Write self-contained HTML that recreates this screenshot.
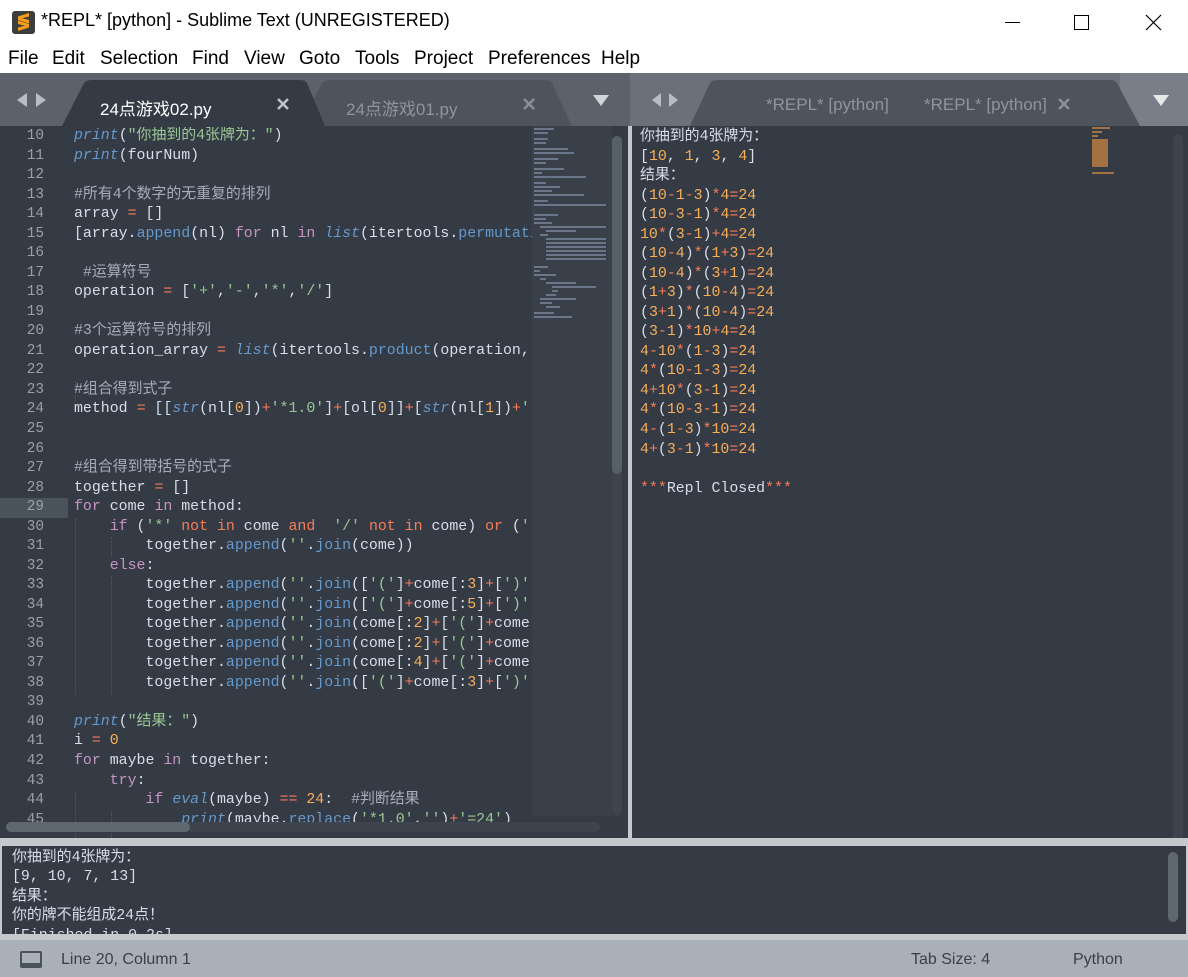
<!DOCTYPE html>
<html><head><meta charset="utf-8">
<style>
*{margin:0;padding:0;box-sizing:border-box}
body{width:1188px;height:977px;overflow:hidden;background:#343b45;font-family:"Liberation Sans","Noto Sans CJK SC",sans-serif;position:relative}
.abs{position:absolute}
#title{left:0;top:0;width:1188px;height:40px;background:#fff}
#title .t{left:41px;top:10px;font-size:18px;color:#000;white-space:nowrap}
#menu{left:0;top:40px;width:1188px;height:35px;background:#fff}
#menu span{position:absolute;top:8px;font-size:19px;color:#000}
#tabbar{left:0;top:73px;width:1188px;height:53px;background:#5b626c}
.mono{font-family:"Liberation Mono","Noto Sans CJK SC",monospace}
.code{font-size:14.9px;line-height:19.53px;white-space:pre;color:#d8dee9}
.ln{color:#9aa0a8;text-align:right;width:44px;font-size:14.4px}
.f{color:#6699cc;font-style:italic}
.m{color:#6699cc}
.s{color:#99c794}
.k{color:#c594c5}
.r{color:#f97b58}
.n{color:#f9ae58}
.c{color:#a6acb9}
</style></head><body>
<div id="title" class="abs">
  <div class="abs" style="left:12px;top:11px;width:23px;height:23px;background:#3d3d3d;border-radius:3px">
    <svg width="23" height="23" viewBox="0 0 23 23"><path d="M17 4 L6 7.5 L6 11 L17 14.5 L17 11 L10 9.3 L17 7.5Z M6 11.5 L17 15 L17 18.5 L6 22 L6 18.5 L13 16.7 L6 15Z" fill="#f89c1c" transform="translate(0,-2)"/></svg>
  </div>
  <div class="abs t">*REPL* [python] - Sublime Text (UNREGISTERED)</div>
  <div class="abs" style="left:1005px;top:22px;width:15px;height:1px;background:#000"></div>
  <div class="abs" style="left:1074px;top:15px;width:15px;height:15px;border:1px solid #000"></div>
  <svg class="abs" style="left:1145px;top:14px" width="17" height="17"><path d="M1 1L16 16M16 1L1 16" stroke="#000" stroke-width="1.2"/></svg>
</div>
<div id="menu" class="abs"><span style="left:8px">File</span><span style="left:52px">Edit</span><span style="left:100px">Selection</span><span style="left:192px">Find</span><span style="left:244px">View</span><span style="left:299px">Goto</span><span style="left:355px">Tools</span><span style="left:414px">Project</span><span style="left:488px">Preferences</span><span style="left:601px">Help</span></div>
<div id="tabbar" class="abs">
  <svg class="abs" style="left:0;top:0" width="1188" height="53">
    <rect x="630" y="0" width="558" height="53" fill="#6a717a"/>
    <rect x="1120" y="0" width="68" height="53" fill="#787f88"/>
    <path d="M17 27 L27 20 L27 34Z M36 20 L46 27 L36 34Z" fill="#b8bdc3"/>
    <path d="M652 27 L661 20 L661 34Z M669 20 L678 27 L669 34Z" fill="#b8bdc3"/>
    <path d="M300 53 L322 10 Q325 7 330 7 L545 7 Q550 7 552 10 L572 53Z" fill="#4d545e"/>
    <path d="M62 53 L84 10 Q86 7 92 7 L300 7 Q305 7 307 10 L325 53Z" fill="#343b45"/>
    <path d="M690 53 L710 10 Q712 7 718 7 L1110 7 Q1115 7 1117 10 L1140 53Z" fill="#4d545e"/>
    <path d="M593 22 L609 22 L601 33Z" fill="#d0d4d8"/>
    <path d="M1153 22 L1169 22 L1161 33Z" fill="#e6e8ea"/>
    <path d="M278 26 L288 36 M288 26 L278 36" stroke="#c0c4c9" stroke-width="2.5"/>
    <path d="M524 26 L534 36 M534 26 L524 36" stroke="#8a9098" stroke-width="2.5"/>
    <path d="M1059 26 L1069 36 M1069 26 L1059 36" stroke="#8a9098" stroke-width="2.5"/>
  </svg>
  <div class="abs" style="left:100px;top:22px;font-size:17px;color:#fff">24点游戏02.py</div>
  <div class="abs" style="left:346px;top:22px;font-size:17px;color:#8f959c">24点游戏01.py</div>
  <div class="abs" style="left:766px;top:22px;font-size:17px;color:#8f959c">*REPL* [python]</div>
  <div class="abs" style="left:924px;top:22px;font-size:17px;color:#8f959c">*REPL* [python]</div>
</div>
<!-- left pane -->
<div class="abs" style="left:0;top:126px;width:628px;height:714px;background:#343b45;overflow:hidden">
  <div class="abs" style="left:0;top:372px;width:68px;height:20px;background:#4a525c"></div>
  <div class="abs mono code ln" style="left:0;top:1px"><div>10
11
12
13
14
15
16
17
18
19
20
21
22
23
24
25
26
27
28
29
30
31
32
33
34
35
36
37
38
39
40
41
42
43
44
45</div></div>
  <div class="abs" style="left:75px;top:255px;width:1px;height:20px;border-left:1px dotted #4f5762"></div>
  <div class="abs" style="left:75px;top:392px;width:1px;height:176px;border-left:1px dotted #4f5762"></div>
  <div class="abs" style="left:75px;top:666px;width:1px;height:52px;border-left:1px dotted #4f5762"></div>
  <div class="abs" style="left:111px;top:411px;width:1px;height:20px;border-left:1px dotted #4f5762"></div>
  <div class="abs" style="left:111px;top:450px;width:1px;height:118px;border-left:1px dotted #4f5762"></div>
  <div class="abs" style="left:111px;top:685px;width:1px;height:33px;border-left:1px dotted #4f5762"></div>
  <div class="abs mono code" style="left:74px;top:1px;width:458px;overflow:hidden"><div><span class="f">print</span>(<span class="s">"你抽到的4张牌为："</span>)
<span class="f">print</span>(fourNum)

<span class="c">#所有4个数字的无重复的排列</span>
array <span class="r">=</span> []
[array.<span class="m">append</span>(nl) <span class="k">for</span> nl <span class="k">in</span> <span class="f">list</span>(itertools.<span class="m">permutations</span>(

 <span class="c">#运算符号</span>
operation <span class="r">=</span> [<span class="s">'+'</span>,<span class="s">'-'</span>,<span class="s">'*'</span>,<span class="s">'/'</span>]

<span class="c">#3个运算符号的排列</span>
operation_array <span class="r">=</span> <span class="f">list</span>(itertools.<span class="m">product</span>(operation,

<span class="c">#组合得到式子</span>
method <span class="r">=</span> [[<span class="f">str</span>(nl[<span class="n">0</span>])<span class="r">+</span><span class="s">'*1.0'</span>]<span class="r">+</span>[ol[<span class="n">0</span>]]<span class="r">+</span>[<span class="f">str</span>(nl[<span class="n">1</span>])<span class="r">+</span><span class="s">'</span>


<span class="c">#组合得到带括号的式子</span>
together <span class="r">=</span> []
<span class="k">for</span> come <span class="k">in</span> method:
    <span class="k">if</span> (<span class="s">'*'</span> <span class="r">not in</span> come <span class="r">and</span>  <span class="s">'/'</span> <span class="r">not in</span> come) <span class="r">or</span> (<span class="s">'</span>
        together.<span class="m">append</span>(<span class="s">''</span>.<span class="m">join</span>(come))
    <span class="k">else</span>:
        together.<span class="m">append</span>(<span class="s">''</span>.<span class="m">join</span>([<span class="s">'('</span>]<span class="r">+</span>come[:<span class="n">3</span>]<span class="r">+</span>[<span class="s">')'</span>
        together.<span class="m">append</span>(<span class="s">''</span>.<span class="m">join</span>([<span class="s">'('</span>]<span class="r">+</span>come[:<span class="n">5</span>]<span class="r">+</span>[<span class="s">')'</span>
        together.<span class="m">append</span>(<span class="s">''</span>.<span class="m">join</span>(come[:<span class="n">2</span>]<span class="r">+</span>[<span class="s">'('</span>]<span class="r">+</span>come
        together.<span class="m">append</span>(<span class="s">''</span>.<span class="m">join</span>(come[:<span class="n">2</span>]<span class="r">+</span>[<span class="s">'('</span>]<span class="r">+</span>come
        together.<span class="m">append</span>(<span class="s">''</span>.<span class="m">join</span>(come[:<span class="n">4</span>]<span class="r">+</span>[<span class="s">'('</span>]<span class="r">+</span>come
        together.<span class="m">append</span>(<span class="s">''</span>.<span class="m">join</span>([<span class="s">'('</span>]<span class="r">+</span>come[:<span class="n">3</span>]<span class="r">+</span>[<span class="s">')'</span>

<span class="f">print</span>(<span class="s">"结果："</span>)
i <span class="r">=</span> <span class="n">0</span>
<span class="k">for</span> maybe <span class="k">in</span> together:
    <span class="k">try</span>:
        <span class="k">if</span> <span class="f">eval</span>(maybe) <span class="r">==</span> <span class="n">24</span>:  <span class="c">#判断结果</span>
            <span class="f">print</span>(maybe.<span class="m">replace</span>(<span class="s">'*1.0'</span>,<span class="s">''</span>)<span class="r">+</span><span class="s">'=24'</span>)</div></div>
  <!-- minimap -->
  <div class="abs" style="left:532px;top:0;width:80px;height:690px;background:#39404a"></div>
  <svg class="abs" style="left:532px;top:0" width="80" height="200">
    <g fill="#7f8fa6" opacity="0.7">
      <rect x="2" y="2" width="20" height="2"/><rect x="2" y="6" width="14" height="2"/>
      <rect x="2" y="12" width="14" height="2"/><rect x="2" y="16" width="12" height="2"/>
      <rect x="2" y="22" width="34" height="2"/><rect x="2" y="26" width="40" height="2"/>
      <rect x="2" y="32" width="24" height="2"/><rect x="2" y="36" width="12" height="2"/>
      <rect x="2" y="42" width="30" height="2"/><rect x="2" y="46" width="8" height="2"/><rect x="2" y="50" width="52" height="2"/>
      <rect x="2" y="56" width="12" height="2"/><rect x="2" y="60" width="26" height="2"/>
      <rect x="2" y="64" width="18" height="2"/><rect x="2" y="68" width="50" height="2"/>
      <rect x="2" y="74" width="14" height="2"/><rect x="2" y="78" width="72" height="2"/>
      <rect x="2" y="88" width="24" height="2"/><rect x="2" y="92" width="12" height="2"/><rect x="2" y="96" width="18" height="2"/>
      <rect x="8" y="100" width="66" height="2"/><rect x="14" y="104" width="30" height="2"/><rect x="8" y="108" width="8" height="2"/>
      <rect x="14" y="112" width="60" height="2"/><rect x="14" y="116" width="60" height="2"/><rect x="14" y="120" width="60" height="2"/>
      <rect x="14" y="124" width="60" height="2"/><rect x="14" y="128" width="60" height="2"/><rect x="14" y="132" width="60" height="2"/>
      <rect x="2" y="140" width="14" height="2"/><rect x="2" y="144" width="6" height="2"/><rect x="2" y="148" width="22" height="2"/>
      <rect x="8" y="152" width="6" height="2"/><rect x="14" y="156" width="30" height="2"/><rect x="20" y="160" width="44" height="2"/>
      <rect x="20" y="164" width="6" height="2"/><rect x="14" y="168" width="10" height="2"/><rect x="8" y="172" width="36" height="2"/>
      <rect x="8" y="176" width="12" height="2"/><rect x="14" y="180" width="14" height="2"/><rect x="2" y="186" width="20" height="2"/><rect x="2" y="190" width="38" height="2"/>
    </g>
  </svg>
  <div class="abs" style="left:612px;top:10px;width:10px;height:680px;background:#3d444e;border-radius:5px"></div>
  <div class="abs" style="left:612px;top:10px;width:10px;height:338px;background:#566069;border-radius:5px"></div>
  <div class="abs" style="left:6px;top:696px;width:594px;height:10px;background:#3d444e;border-radius:5px"></div>
  <div class="abs" style="left:6px;top:696px;width:184px;height:10px;background:#5f6770;border-radius:5px"></div>
</div>
<div class="abs" style="left:628px;top:126px;width:4px;height:714px;background:#c5c9ce"></div>
<!-- right pane -->
<div class="abs" style="left:632px;top:126px;width:556px;height:714px;background:#343b45;overflow:hidden">
  <div class="abs mono code" style="left:8px;top:2px"><div>你抽到的4张牌为：
[<span class="n">10</span>, <span class="n">1</span>, <span class="n">3</span>, <span class="n">4</span>]
结果：
(<span class="n">10</span><span class="r">-</span><span class="n">1</span><span class="r">-</span><span class="n">3</span>)<span class="r">*</span><span class="n">4</span><span class="r">=</span><span class="n">24</span>
(<span class="n">10</span><span class="r">-</span><span class="n">3</span><span class="r">-</span><span class="n">1</span>)<span class="r">*</span><span class="n">4</span><span class="r">=</span><span class="n">24</span>
<span class="n">10</span><span class="r">*</span>(<span class="n">3</span><span class="r">-</span><span class="n">1</span>)<span class="r">+</span><span class="n">4</span><span class="r">=</span><span class="n">24</span>
(<span class="n">10</span><span class="r">-</span><span class="n">4</span>)<span class="r">*</span>(<span class="n">1</span><span class="r">+</span><span class="n">3</span>)<span class="r">=</span><span class="n">24</span>
(<span class="n">10</span><span class="r">-</span><span class="n">4</span>)<span class="r">*</span>(<span class="n">3</span><span class="r">+</span><span class="n">1</span>)<span class="r">=</span><span class="n">24</span>
(<span class="n">1</span><span class="r">+</span><span class="n">3</span>)<span class="r">*</span>(<span class="n">10</span><span class="r">-</span><span class="n">4</span>)<span class="r">=</span><span class="n">24</span>
(<span class="n">3</span><span class="r">+</span><span class="n">1</span>)<span class="r">*</span>(<span class="n">10</span><span class="r">-</span><span class="n">4</span>)<span class="r">=</span><span class="n">24</span>
(<span class="n">3</span><span class="r">-</span><span class="n">1</span>)<span class="r">*</span><span class="n">10</span><span class="r">+</span><span class="n">4</span><span class="r">=</span><span class="n">24</span>
<span class="n">4</span><span class="r">-</span><span class="n">10</span><span class="r">*</span>(<span class="n">1</span><span class="r">-</span><span class="n">3</span>)<span class="r">=</span><span class="n">24</span>
<span class="n">4</span><span class="r">*</span>(<span class="n">10</span><span class="r">-</span><span class="n">1</span><span class="r">-</span><span class="n">3</span>)<span class="r">=</span><span class="n">24</span>
<span class="n">4</span><span class="r">+</span><span class="n">10</span><span class="r">*</span>(<span class="n">3</span><span class="r">-</span><span class="n">1</span>)<span class="r">=</span><span class="n">24</span>
<span class="n">4</span><span class="r">*</span>(<span class="n">10</span><span class="r">-</span><span class="n">3</span><span class="r">-</span><span class="n">1</span>)<span class="r">=</span><span class="n">24</span>
<span class="n">4</span><span class="r">-</span>(<span class="n">1</span><span class="r">-</span><span class="n">3</span>)<span class="r">*</span><span class="n">10</span><span class="r">=</span><span class="n">24</span>
<span class="n">4</span><span class="r">+</span>(<span class="n">3</span><span class="r">-</span><span class="n">1</span>)<span class="r">*</span><span class="n">10</span><span class="r">=</span><span class="n">24</span>

<span class="r">***</span>Repl Closed<span class="r">***</span></div></div>
  <svg class="abs" style="left:460px;top:0" width="30" height="60"><g fill="#c08040" opacity="0.8">
    <rect x="0" y="1" width="18" height="2"/><rect x="0" y="5" width="10" height="2"/><rect x="0" y="9" width="6" height="2"/>
    <rect x="0" y="13" width="16" height="28"/><rect x="0" y="46" width="22" height="2"/></g></svg>
  <div class="abs" style="left:541px;top:8px;width:10px;height:710px;background:#3d444e;border-radius:5px"></div>
</div>
<!-- output panel -->
<div class="abs" style="left:0;top:838px;width:1188px;height:102px;background:#c5c9ce"></div>
<div class="abs" style="left:2px;top:846px;width:1184px;height:88px;background:#343b45;overflow:hidden">
  <div class="abs mono" style="left:10px;top:3px;font-size:14.9px;line-height:19.4px;white-space:pre;color:#d8dee9">你抽到的4张牌为：
[9, 10, 7, 13]
结果：
你的牌不能组成24点！
[Finished in 0.2s]</div>
  <div class="abs" style="left:1166px;top:6px;width:10px;height:70px;background:#5f6770;border-radius:5px"></div>
</div>
<!-- status bar -->
<div class="abs" style="left:0;top:940px;width:1188px;height:37px;background:#aab0b8">
  <div class="abs" style="left:20px;top:11px;width:22px;height:17px;border:2px solid #4a525c;border-radius:2px;border-bottom:5px solid #4a525c"></div>
  <div class="abs" style="left:61px;top:11px;font-size:16px;color:#3a4048">Line 20, Column 1</div>
  <div class="abs" style="left:911px;top:11px;font-size:16px;color:#3a4048">Tab Size: 4</div>
  <div class="abs" style="left:1073px;top:11px;font-size:16px;color:#3a4048">Python</div>
</div>
</body></html>
